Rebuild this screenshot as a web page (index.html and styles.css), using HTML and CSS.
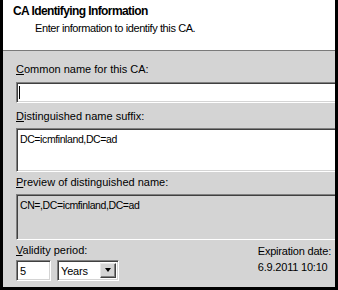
FILE: index.html
```html
<!DOCTYPE html>
<html lang="en">
<head>
  <meta charset="UTF-8" />
  <title>CA Identifying Information</title>
  <link rel="stylesheet" href="styles.css">
</head>
<body>
  <div class="dialog">

    <div class="header">
      <div class="title">CA Identifying Information</div>
      <div class="subtitle">Enter information to identify this CA.</div>
    </div>

    <div class="content">
      <div class="label"><u>C</u>ommon name for this CA:</div>
      <div class="field textbox"><span class="caret"></span></div>

      <div class="label"><u>D</u>istinguished name suffix:</div>
      <div class="field textarea">DC=icmfinland,DC=ad</div>

      <div class="label"><u>P</u>review of distinguished name:</div>
      <div class="field preview">CN=,DC=icmfinland,DC=ad</div>

      <div class="bottom">
        <div class="validity">
          <div class="label"><u>V</u>alidity period:</div>
          <div class="controls">
            <div class="field small">5</div>
            <div class="field select">
              <span>Years</span>
              <span class="drop"><span class="arrow"></span></span>
            </div>
          </div>
        </div>
        <div class="expiry">
          <div>Expiration date:</div>
          <div>6.9.2011 10:10</div>
        </div>
      </div>
    </div>

  </div>
</body>
</html>
```

FILE: styles.css
```css
body {
  margin: 0;
  width: 338px;
  height: 290px;
  background: #000;
  font-family: "Liberation Sans", Arial, sans-serif;
  font-size: 11px;
  color: #000;
  overflow: hidden;
}

.dialog {
  margin: 0 3px;
  height: 287px;
  background: #d4d4d4;
  display: flex;
  flex-direction: column;
  overflow: hidden;
}

.header {
  box-sizing: border-box;
  height: 51px;
  background: #fff;
  border-bottom: 1px solid #7a7a7a;
  padding: 4px 0 0 10px;
}

.title {
  font-weight: bold;
  font-size: 12px;
  line-height: 14px;
  letter-spacing: -0.6px;
}

.subtitle {
  margin: 4px 0 0 22px;
  line-height: 13px;
  letter-spacing: -0.4px;
}

.content {
  padding: 12px 0 0 13px;
  display: flex;
  flex-direction: column;
}

.label {
  line-height: 13px;
  height: 13px;
}

.field {
  box-sizing: border-box;
  border: 1px solid;
  border-color: #808080 #fff #fff #808080;
  box-shadow: inset 1px 1px #404040, inset -1px -1px #d4d4d4;
  background: #fff;
  padding: 4px 0 0 3px;
  line-height: 13px;
  font-size: 10.5px;
  letter-spacing: -0.4px;
}

.textbox,
.textarea,
.preview {
  margin-right: -4px;
}

.textbox {
  height: 21px;
  margin-top: 6px;
  margin-bottom: 7px;
  position: relative;
}

.caret {
  position: absolute;
  left: 2px;
  top: 3px;
  width: 1px;
  height: 13px;
  background: #000;
}

.textarea {
  height: 44px;
  margin-top: 5px;
  margin-bottom: 4px;
}

.preview {
  height: 46px;
  margin-top: 5px;
  margin-bottom: 4px;
  background: #d4d4d4;
}

.bottom {
  display: flex;
  justify-content: space-between;
  padding-right: 4px;
}

.controls {
  display: flex;
  gap: 6px;
  margin-top: 3px;
}

.small {
  width: 35px;
  height: 21px;
  font-size: 11px;
}

.select {
  width: 62px;
  height: 21px;
  display: flex;
  justify-content: space-between;
  padding: 2px 2px 2px 3px;
  font-size: 11px;
  letter-spacing: -0.2px;
}

.select span:first-child {
  padding-top: 2px;
}

.drop {
  width: 16px;
  height: 15px;
  box-sizing: border-box;
  background: #d4d4d4;
  border: 1px solid;
  border-color: #e8e8e8 #404040 #404040 #e8e8e8;
  box-shadow: inset -1px -1px #808080;
  display: flex;
  align-items: center;
  justify-content: center;
}

.arrow {
  width: 0;
  height: 0;
  border-left: 3.5px solid transparent;
  border-right: 3.5px solid transparent;
  border-top: 4px solid #000;
}

.expiry {
  line-height: 16px;
  letter-spacing: -0.2px;
  margin-top: -1px;
}
```
